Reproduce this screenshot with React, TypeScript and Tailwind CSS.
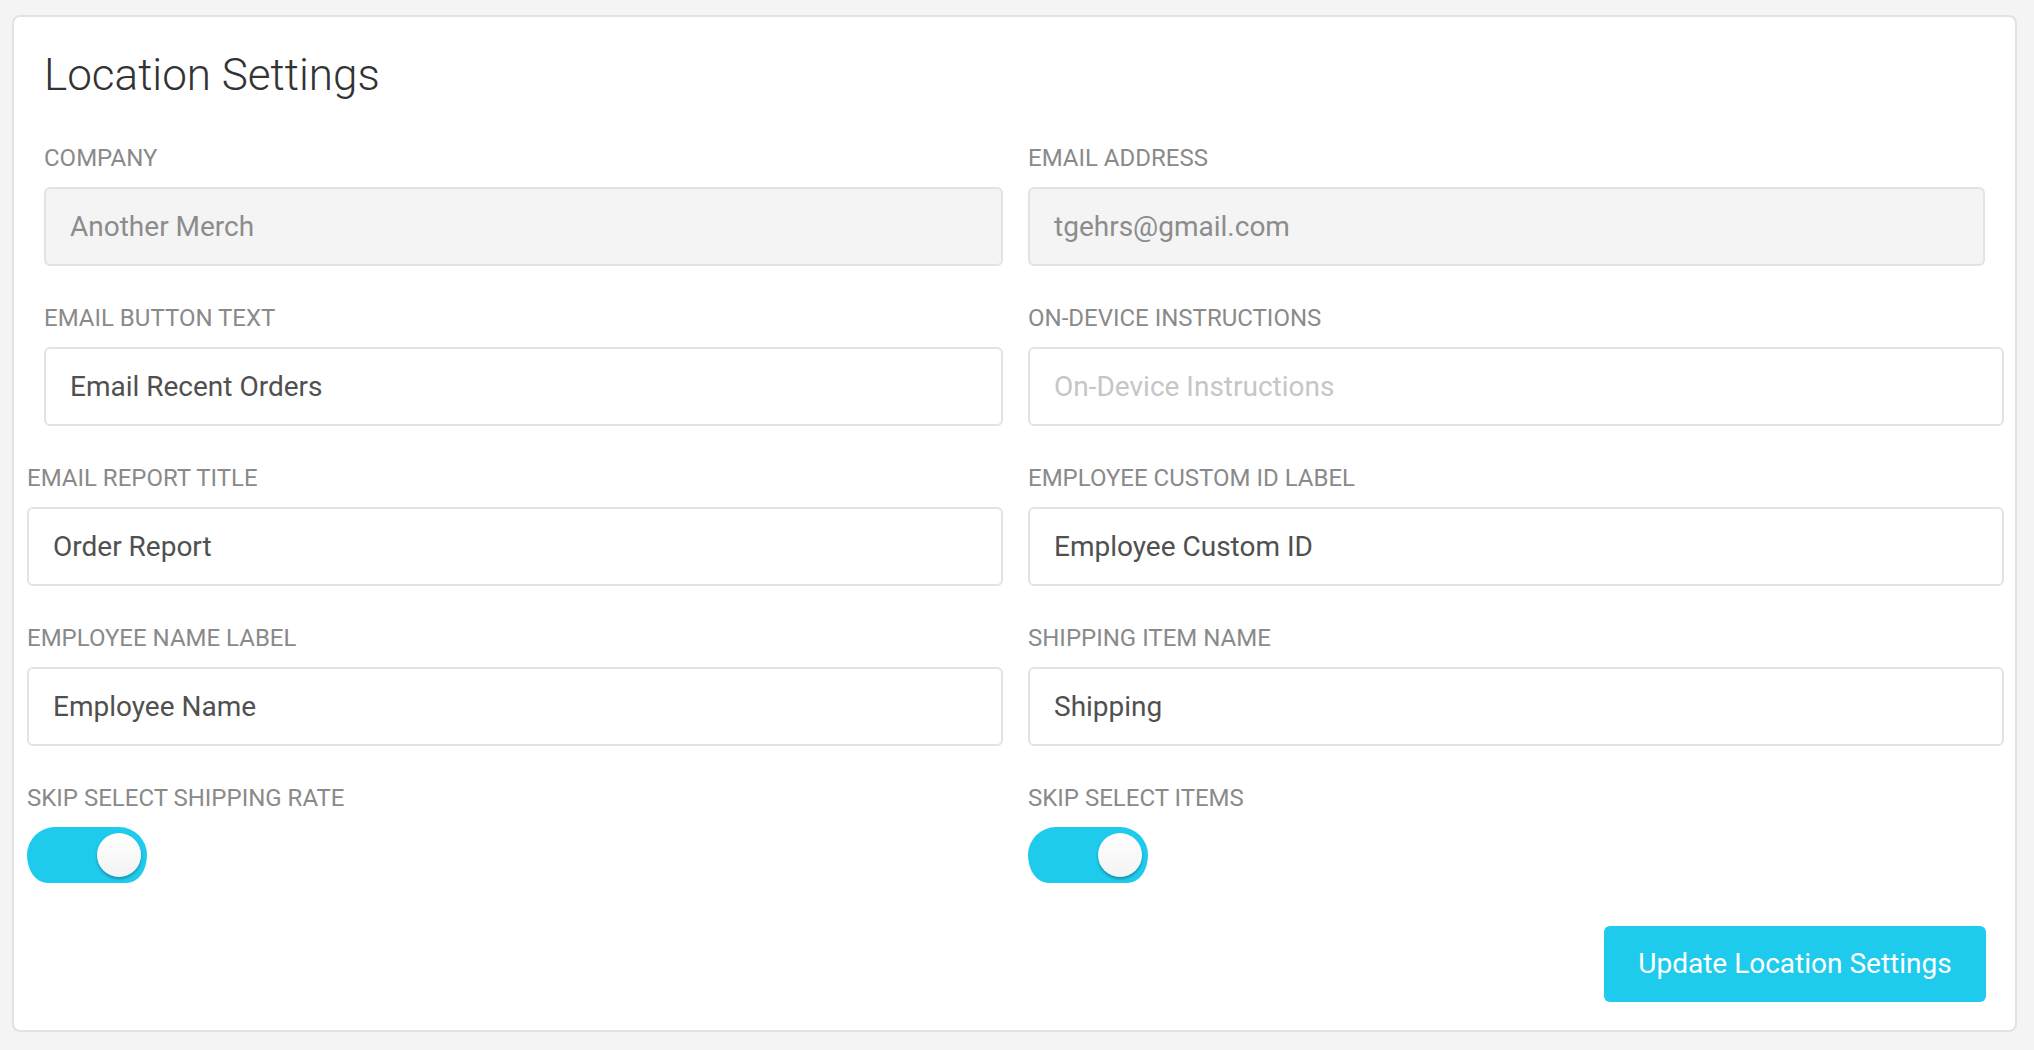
import React from "react";

const font = { fontFamily: "Roboto, 'Noto Sans', sans-serif" };

function Label({ children }: { children: React.ReactNode }) {
  return (
    <div className="text-[24px] leading-[27px] text-[#8a8a8a] uppercase mb-[15px] whitespace-nowrap">
      {children}
    </div>
  );
}

function Field({
  label,
  value,
  placeholder,
  disabled,
  inset,
}: {
  label: string;
  value?: string;
  placeholder?: string;
  disabled?: boolean;
  inset?: string;
}) {
  return (
    <div className={inset ?? ""}>
      <Label>{label}</Label>
      <input
        readOnly
        defaultValue={value}
        placeholder={placeholder}
        className={
          "block w-full h-[79px] px-[24px] border-2 border-[#e3e3e3] rounded-[6px] text-[28px] outline-none placeholder:text-[#c6c6c6] " +
          (disabled ? "bg-[#f4f4f4] text-[#8c8c8c]" : "bg-white text-[#505050]")
        }
        style={font}
      />
    </div>
  );
}

function Toggle() {
  return (
    <div className="relative w-[120px] h-[56px] bg-[#1ecbed] rounded-tl-[28px] rounded-tr-[28px] rounded-bl-[20px_28px] rounded-br-[20px_28px]">
      <div className="absolute left-[70px] top-[6px] w-[44px] h-[44px] rounded-full bg-gradient-to-b from-white to-[#f3f3f3] shadow-[0_2px_3px_rgba(0,0,0,0.3)]" />
    </div>
  );
}

function ToggleField({ label }: { label: string }) {
  return (
    <div>
      <Label>{label}</Label>
      <Toggle />
    </div>
  );
}

export default function App() {
  return (
    <div className="min-h-screen bg-[#f4f4f4] pt-[15px] pl-[12px] pr-[17px] pb-[18px]" style={font}>
      <div className="bg-white border-2 border-[#e2e2e2] rounded-[8px] pt-[32px] pb-[28px] pl-[13px] pr-[11px]">
        <h1 className="pl-[17px] text-[44px] leading-[52px] font-light text-[#333333]">Location Settings</h1>
        <div className="mt-[44px] grid grid-cols-[976px_976px] gap-x-[25px] gap-y-[39px]">
          <Field label="Company" value="Another Merch" disabled inset="pl-[17px]" />
          <Field label="Email Address" value="tgehrs@gmail.com" disabled inset="pr-[19px]" />
          <Field label="Email Button Text" value="Email Recent Orders" inset="pl-[17px]" />
          <Field label="On-Device Instructions" placeholder="On-Device Instructions" />
          <Field label="Email Report Title" value="Order Report" />
          <Field label="Employee Custom ID Label" value="Employee Custom ID" />
          <Field label="Employee Name Label" value="Employee Name" />
          <Field label="Shipping Item Name" value="Shipping" />
          <ToggleField label="Skip Select Shipping Rate" />
          <ToggleField label="Skip Select Items" />
        </div>
        <div className="mt-[43px] flex justify-end pr-[18px]">
          <button className="w-[382px] h-[76px] rounded-[6px] bg-[#1ecbed] text-white text-[28px]" style={font}>
            Update Location Settings
          </button>
        </div>
      </div>
    </div>
  );
}
